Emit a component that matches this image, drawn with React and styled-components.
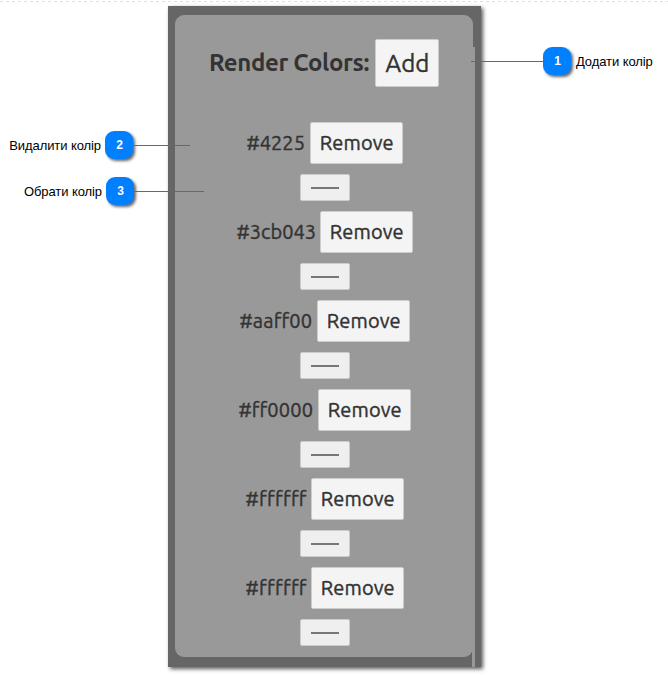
import React from "react";
import styled, { createGlobalStyle } from "styled-components";

const GlobalStyle = createGlobalStyle`
  * { box-sizing: border-box; }
  body { margin: 0; background: #fff; overflow: hidden; }
`;

const Page = styled.main`
  width: 668px;
  height: 675px;
  padding-top: 1px;
  overflow: hidden;
`;

const DashedRule = styled.div`
  height: 1px;
  margin-bottom: 4px;
  background: repeating-linear-gradient(90deg, #e0e0e0 0 3px, transparent 3px 6px);
`;

const Figure = styled.div`
  display: grid;
  grid-template-columns: 168px 313px 187px;
  height: 661px;
`;

const Panel = styled.section`
  display: flex;
  height: 661px;
  padding: 9px 6px 0 7px;
  background: #666;
  box-shadow: 2px 2px 4px rgba(0, 0, 0, 0.65);
`;

const Content = styled.div`
  display: flex;
  flex-direction: column;
  align-items: center;
  flex: none;
  width: 298px;
  height: 642px;
  padding: 24px 0 0 2px;
  border-radius: 9px;
  background: #999;
`;

const ScrollThumb = styled.div`
  flex: none;
  width: 3px;
  height: 620px;
  margin: 32px 0 0 -1px;
  background: #999;
`;

const Header = styled.header`
  display: flex;
  align-items: center;
  height: 48px;
  margin-bottom: 35px;
`;

const Title = styled.h1`
  display: flex;
  justify-content: flex-end;
  width: 164px;
  margin: 0;
  padding-right: 6px;
  font: 700 24px/48px Ubuntu, "Noto Sans", sans-serif;
  letter-spacing: -0.37px;
  white-space: nowrap;
  color: #333;
`;

const Button = styled.button`
  display: flex;
  align-items: center;
  justify-content: center;
  width: ${(p) => (p.$large ? 64 : 93)}px;
  height: ${(p) => (p.$large ? 48 : 42)}px;
  padding: ${(p) => (p.$large ? "2px 0 0 1px" : "0 0 0 0.5px")};
  border: 1px solid #ccc;
  border-radius: 2px;
  background: #f4f4f4;
  color: #333;
  font: 400 ${(p) => (p.$large ? 24 : 20)}px/1 Ubuntu, "Noto Sans", sans-serif;
  letter-spacing: 0.12px;
  -webkit-text-stroke: 0.4px #333;
`;

const ColorItem = styled.div`
  display: flex;
  flex-direction: column;
  align-items: center;
  height: 89px;
`;

const ColorRow = styled.div`
  display: flex;
  align-items: center;
  height: 42px;
  margin-bottom: 10px;
`;

const Hex = styled.span`
  width: ${(p) => p.$width}px;
  font: 400 20px/42px Ubuntu, "Noto Sans", sans-serif;
  letter-spacing: ${(p) => p.$tracking}px;
  text-indent: -0.5px;
  white-space: nowrap;
  color: #333;
  -webkit-text-stroke: 0.4px #333;
`;

const Swatch = styled.button`
  width: 50px;
  height: 27px;
  padding: 12px 10px 11px;
  border: 1px solid #ccc;
  border-radius: 2px;
  background: #efefef;
`;

const SwatchLine = styled.span`
  display: block;
  width: 28px;
  height: 2px;
  background: #777;
`;

const Side = styled.aside`
  position: relative;
  z-index: 1;
  display: flex;
  flex-direction: column;
  gap: 18px;
  padding-top: ${(p) => p.$top}px;
`;

const Callout = styled.div`
  display: flex;
  align-items: center;
  width: ${(p) => p.$width}px;
  height: 28px;
  margin-left: ${(p) => p.$left || 0}px;
  justify-content: ${(p) => (p.$left ? "flex-start" : "flex-end")};
`;

const Lead = styled.div`
  flex: none;
  width: ${(p) => p.$length}px;
  height: 1px;
  margin-top: 1px;
  background: #0a7eee;
`;

const Badge = styled.div`
  flex: none;
  width: 28px;
  height: 28px;
  padding-left: 1px;
  border-radius: 9px;
  background: #0080ff;
  box-shadow: 2px 2px 3px rgba(0, 0, 0, 0.6);
  color: #fff;
  font: 700 12px/28px "Liberation Sans", Arial, sans-serif;
  text-align: center;
`;

const Caption = styled.span`
  padding: 2px 4px 0 5px;
  font: 400 13px/28px "Liberation Sans", Arial, sans-serif;
  letter-spacing: -0.08px;
  white-space: nowrap;
  color: #000;
`;

const colors = [
  { hex: "#4225", width: 63, tracking: 0.05 },
  { hex: "#3cb043", width: 83, tracking: 0.05 },
  { hex: "#aaff00", width: 77, tracking: 0.15 },
  { hex: "#ff0000", width: 79, tracking: 0.15 },
  { hex: "#ffffff", width: 65, tracking: 0.35 },
  { hex: "#ffffff", width: 65, tracking: 0.35 },
];

export default function App() {
  return (
    <Page>
      <GlobalStyle />
      <DashedRule />
      <Figure>
        <Side $top={125}>
          <Callout $width={190}>
            <Caption>Видалити колір</Caption>
            <Badge>2</Badge>
            <Lead $length={57} />
          </Callout>
          <Callout $width={204}>
            <Caption>Обрати колір</Caption>
            <Badge>3</Badge>
            <Lead $length={70} />
          </Callout>
        </Side>
        <Panel>
          <Content>
            <Header>
              <Title>Render Colors:</Title>
              <Button $large>Add</Button>
            </Header>
            {colors.map((c, i) => (
              <ColorItem key={i}>
                <ColorRow>
                  <Hex $width={c.width} $tracking={c.tracking}>{c.hex}</Hex>
                  <Button>Remove</Button>
                </ColorRow>
                <Swatch aria-label={c.hex}>
                  <SwatchLine />
                </Swatch>
              </ColorItem>
            ))}
          </Content>
          <ScrollThumb />
        </Panel>
        <Side $top={41}>
          <Callout $width={197} $left={-10}>
            <Lead $length={72} />
            <Badge>1</Badge>
            <Caption>Додати колір</Caption>
          </Callout>
        </Side>
      </Figure>
    </Page>
  );
}
